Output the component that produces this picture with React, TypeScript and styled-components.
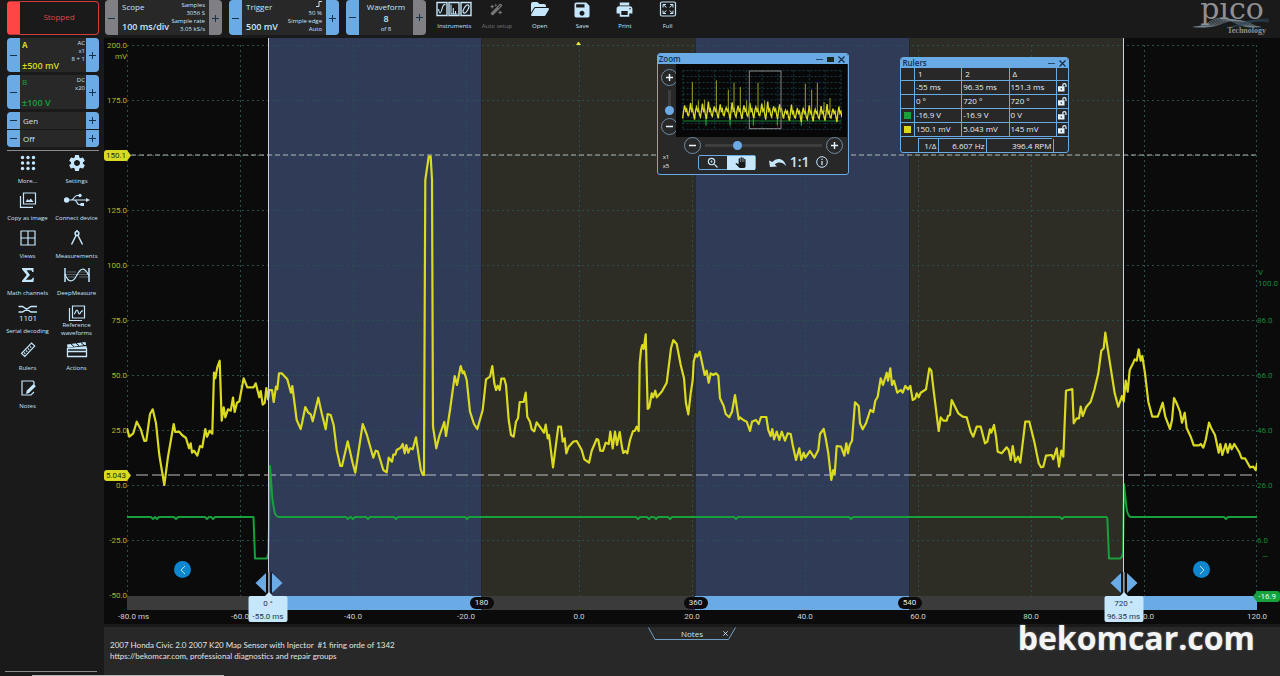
import React from "react";
import styled, { createGlobalStyle, css } from "styled-components";
import { MdPrint, MdSave, MdSettings, MdPanTool, MdZoomIn } from "react-icons/md";
import { FaFolderOpen, FaWandMagicSparkles } from "react-icons/fa6";

const c = {
  page: "#1a1a1a",
  panel: "#282828",
  plot: "#0b0b0b",
  blue: "#6aabe6",
  ice: "#c5e6fb",
  yellow: "#dada22",
  green: "#18a03c",
  grid: "#28504f",
  bandBlue: "#303b58",
  bandOlive: "#2d2d26",
  grey: "#808084",
};

const GlobalStyle = createGlobalStyle`
  * { box-sizing: border-box; }
  body { margin: 0; background: ${c.page}; font-family: "Open Sans", "Noto Sans", sans-serif; color: ${c.ice}; overflow: hidden; }
  button { font: inherit; color: inherit; padding: 0; border: 0; background: none; cursor: pointer; }
`;

/* ---------- page frame ---------- */

const Page = styled.div`
  display: grid;
  grid-template-columns: 104px minmax(0, 1fr);
  height: 100vh;
  min-height: 560px;
  position: relative;
`;

const Sidebar = styled.aside`
  display: flex;
  flex-direction: column;
  padding: 0 5px 4px 7px;
`;

const Main = styled.main`
  display: grid;
  grid-template-rows: 38px minmax(0, 1fr) 49px;
  min-width: 0;
`;

const Toolbar = styled.header`
  display: flex;
  align-items: flex-start;
  padding-left: 1px;
  gap: 7px;
`;

const Progress = styled.div`
  position: absolute;
  left: 32px;
  bottom: 0;
  width: 192px;
  height: 1px;
  background: #b8b8b8;
`;

/* ---------- pods ---------- */

const StopButton = styled.button`
  height: 34px;
  width: 92px;
  margin-top: 1px;
  border: 1px solid #d23b3b;
  border-left: 13px solid #ff4545;
  border-radius: 4px;
  color: #e04444;
  font-size: 8px;
  line-height: 30px;
  padding-bottom: 2px;
  flex: none;
`;

const Pod = styled.section<{ $w: number; $h: number }>`
  display: grid;
  grid-template-columns: 13px minmax(0, 1fr) 13px;
  width: ${(p) => p.$w}px;
  height: ${(p) => p.$h}px;
  background: ${c.panel};
  border-radius: 4px;
  overflow: hidden;
  flex: none;
`;

const Step = styled.button<{ $off?: boolean }>`
  display: grid;
  place-items: center;
  background: ${(p) => (p.$off ? c.grey : c.blue)};
  color: #16334d;
`;

const PodBody = styled.div`
  display: flex;
  justify-content: space-between;
  padding: 1px 4px 3px;
`;

const ChannelBody = styled(PodBody)`
  padding: 1px 1px 0 2px;
`;

const PodLeft = styled.div<{ $color?: string }>`
  display: flex;
  flex-direction: column;
  justify-content: space-between;
  color: ${(p) => p.$color || c.ice};
  font-size: 8px;
  line-height: 11px;
  white-space: nowrap;
`;

const PodValue = styled.strong`
  font-size: 9px;
  line-height: 13px;
  font-weight: 600;
`;

const PodRight = styled.div`
  font-size: 6px;
  line-height: 8px;
  text-align: right;
  white-space: nowrap;
`;

const WaveBody = styled.div`
  display: flex;
  flex-direction: column;
  align-items: center;
  justify-content: space-between;
  padding: 1px 0;
  font-size: 8px;
  line-height: 11px;
`;

const Small = styled.span`
  font-size: 6px;
  line-height: 9px;
`;

const Channels = styled.div`
  display: flex;
  flex-direction: column;
  gap: 3px;
  padding-top: 3px;
`;

const GenPair = styled.div`
  display: grid;
  gap: 1px;
  border-radius: 4px;
  overflow: hidden;
  width: 92px;
`;

const GenRow = styled.div`
  display: grid;
  grid-template-columns: 13px 1fr 13px;
  height: 17px;
  background: ${c.panel};
  font-size: 8px;
  line-height: 17px;
`;

const GenLabel = styled.span`
  padding-left: 3px;
`;

/* ---------- tool buttons ---------- */

const Tools = styled.nav`
  display: grid;
  grid-template-columns: 49px 49px;
  grid-template-rows: repeat(7, 1fr);
  height: 262px;
  margin-left: -4px;
  margin-top: 2px;
`;

const Tool = styled.button<{ $dim?: boolean }>`
  display: flex;
  flex-direction: column;
  align-items: center;
  color: ${(p) => (p.$dim ? "#777" : c.ice)};
  font-size: 6px;
  line-height: 8px;
  white-space: nowrap;

  svg {
    display: block;
    flex: none;
  }
`;

const ToolLabel = styled.span<{ $wrap?: boolean }>`
  margin-top: ${(p) => (p.$wrap ? -2 : 4)}px;
  ${(p) =>
    p.$wrap &&
    css`
      width: 40px;
      white-space: normal;
    `}
`;

const TopTools = styled.nav`
  display: grid;
  grid-template-columns: repeat(6, minmax(0, 1fr));
  width: 256px;
`;

const Rule = styled.hr`
  width: 92px;
  height: 1px;
  border: 0;
  background: #8b8b8b;
  margin: 3px 0 0;
`;

const BottomRule = styled(Rule)`
  margin-top: auto;
  margin-left: -2px;
`;

/* ---------- brand ---------- */

const Brand = styled.div`
  position: relative;
  margin-left: auto;
  margin-right: 9px;
  width: 78px;
  height: 37px;
  color: #8f9092;
  flex: none;
`;

const BrandName = styled.div`
  font: 30px/26px "DejaVu Serif", serif;
  margin-top: -4px;
  text-align: center;
`;

const BrandSub = styled.div`
  font: bold 8px/10px "Liberation Serif", serif;
  text-align: right;
  padding-right: 5px;
  padding-top: 4px;
`;

const BrandWave = styled.svg`
  position: absolute;
  left: 0;
  top: 17px;
`;

/* ---------- scope view ---------- */

const Scope = styled.section`
  position: relative;
  display: grid;
  grid-template-columns: 23px minmax(0, 1fr) 23px;
  grid-template-rows: minmax(0, 1fr) 14px 14px;
  background: ${c.plot};
  margin-bottom: 3px;
  font-family: Roboto, sans-serif;
  font-size: 8px;
`;

const YAxis = styled.div<{ $right?: boolean }>`
  position: relative;
  display: flex;
  flex-direction: column;
  justify-content: space-between;
  padding-top: 7px;
  color: ${(p) => (p.$right ? "#138a34" : "#b3b52c")};
`;

const YTick = styled.div<{ $right?: boolean }>`
  height: 0;
  display: flex;
  align-items: center;
  justify-content: ${(p) => (p.$right ? "flex-start" : "flex-end")};
  white-space: nowrap;
`;

const AxisNote = styled.div<{ $top: number; $right?: boolean }>`
  position: absolute;
  top: ${(p) => p.$top}%;
  ${(p) => (p.$right ? "left: 1px;" : "right: 0;")}
  line-height: 11px;
`;

const Flag = styled.div<{ $top: number }>`
  position: absolute;
  left: 0;
  top: ${(p) => p.$top}%;
  margin-top: -5px;
  width: 27px;
  height: 11px;
  padding-left: 2px;
  line-height: 11px;
  z-index: 2;
  color: #2a2a10;
  background: ${c.yellow};
  border-radius: 3px 0 0 3px;
  clip-path: polygon(0 0, 85% 0, 100% 50%, 85% 100%, 0 100%);
`;

const GreenFlag = styled.div`
  position: absolute;
  right: 0;
  bottom: -6px;
  width: 27px;
  height: 11px;
  padding-right: 4px;
  line-height: 11px;
  text-align: right;
  z-index: 2;
  color: #e8ffe8;
  background: ${c.green};
  border-radius: 0 3px 3px 0;
  clip-path: polygon(0 50%, 15% 0, 100% 0, 100% 100%, 15% 100%);
`;

const PlotArea = styled.div`
  position: relative;
  min-width: 0;
`;

const PlotSvg = styled.svg`
  display: block;
  width: 100%;
  height: 100%;
`;

const RotationBar = styled.div`
  grid-column: 2;
  position: relative;
  display: flex;
`;

const Sector = styled.div<{ $grow: number; $on: boolean }>`
  flex: ${(p) => p.$grow} 0 0;
  background: ${(p) => (p.$on ? c.blue : "#3b3b3b")};
`;

const Degree = styled.span<{ $at: number }>`
  position: absolute;
  left: ${(p) => p.$at}%;
  top: 1px;
  transform: translateX(-50%);
  width: 24px;
  height: 12px;
  border-radius: 6px;
  background: #0b0b0b;
  color: #e6e6e6;
  line-height: 12px;
  text-align: center;
`;

const XAxis = styled.div`
  grid-column: 2;
  display: flex;
  justify-content: space-between;
  color: #d2d2d2;
  line-height: 14px;
`;

const XTick = styled.div`
  width: 0;
  display: flex;
  justify-content: center;
  white-space: pre;
`;

const Unit = styled.span`
  width: 0;
`;

const XLabel = styled.span`
  display: flex;
`;

const RulerTag = styled.div<{ $at: number }>`
  position: absolute;
  left: ${(p) => p.$at}%;
  top: 0;
  transform: translateX(-50%);
  padding: 1px 2px 0;
  min-width: 39px;
  height: 26px;
  border-radius: 2px;
  background: ${c.ice};
  color: #1c3550;
  line-height: 13px;
  text-align: center;
  white-space: nowrap;
  z-index: 2;
`;

const RulerHandle = styled.svg<{ $at: number }>`
  position: absolute;
  left: ${(p) => p.$at}%;
  bottom: 0;
  transform: translateX(-50%);
`;

const PageButton = styled.button<{ $side: "left" | "right" }>`
  position: absolute;
  ${(p) => p.$side}: 47px;
  bottom: 18px;
  width: 17px;
  height: 17px;
  border-radius: 50%;
  background: #0e86d0;
  color: #bfe2ff;
  display: grid;
  place-items: center;
`;

/* ---------- floating windows ---------- */

const Window = styled.section<{ $left: number; $top: number; $w: number }>`
  position: absolute;
  left: ${(p) => p.$left}%;
  top: ${(p) => p.$top}px;
  width: ${(p) => p.$w}px;
  border: 1px solid ${c.blue};
  border-radius: 3px;
  background: ${c.panel};
  overflow: hidden;
  z-index: 3;
  font-family: "Open Sans", "Noto Sans", sans-serif;
`;

const TitleBar = styled.header`
  display: flex;
  align-items: center;
  justify-content: flex-end;
  gap: 3px;
  height: 10px;
  padding: 0 2px 0 1px;
  background: ${c.blue};
  color: #14304a;
  font-size: 8px;
  line-height: 10px;
`;

const Title = styled.h2`
  margin: 0 auto 0 0;
  font-size: inherit;
  font-weight: 600;
`;

const WinButton = styled.button`
  display: grid;
  place-items: center;
  width: 8px;
  height: 10px;
`;

const ZoomTop = styled.div`
  display: grid;
  grid-template-columns: 18px 1fr;
`;

const ZoomSide = styled.div`
  display: flex;
  flex-direction: column;
  align-items: center;
  justify-content: space-between;
  padding: 5px 0 2px 5px;
`;

const Overview = styled.div`
  background: #070707;
  padding: 5px 5px 6px 6px;
  margin-right: 1px;
  height: 73px;
`;

const Round = styled.button`
  display: grid;
  place-items: center;
  width: 17px;
  height: 17px;
  flex: none;
  border: 1px solid #6f8ba3;
  border-radius: 50%;
  color: #eaf6ff;
`;

const Slider = styled.input<{ $vertical?: boolean }>`
  appearance: none;
  margin: 0;
  background: linear-gradient(#3e3e3e, #3e3e3e) center / 100% 3px no-repeat;
  height: 9px;
  flex: 1;
  min-width: 0;
  ${(p) =>
    p.$vertical &&
    css`
      writing-mode: vertical-lr;
      direction: rtl;
      width: 9px;
      height: 25px;
      min-height: 0;
      flex: none;
      background: linear-gradient(#3e3e3e, #3e3e3e) center / 3px 100% no-repeat;
    `}

  &::-webkit-slider-thumb {
    appearance: none;
    width: 9px;
    height: 9px;
    border-radius: 50%;
    background: ${c.blue};
  }
`;

const ZoomSlide = styled.div`
  display: flex;
  align-items: center;
  gap: 4px;
  padding: 0 5px 0 26px;
`;

const ZoomFoot = styled.div`
  display: flex;
  align-items: center;
  padding: 0 19px 4px 5px;
  height: 20px;
`;

const Factors = styled.div`
  width: 35px;
  font-size: 6px;
  line-height: 9px;
  color: #eee;
`;

const Toggle = styled.div`
  display: grid;
  grid-template-columns: 28px 28px;
  height: 15px;
  border: 1px solid ${c.blue};
  border-radius: 2px;
  margin-right: 13px;
`;

const ToggleButton = styled.button<{ $on?: boolean }>`
  display: grid;
  place-items: center;
  background: ${(p) => (p.$on ? c.ice : "transparent")};
  color: ${(p) => (p.$on ? "#1a1a1a" : c.ice)};
`;

const Ratio = styled.button`
  font-size: 14px;
  line-height: 16px;
  font-weight: 600;
  padding: 0 6px 0 3px;
`;

const IconButton = styled.button`
  display: grid;
  place-items: center;
`;

const RulerTable = styled.table`
  width: 100%;
  table-layout: fixed;
  border-collapse: collapse;
  font-size: 8px;
  line-height: 12px;
  color: #e4eef6;

  th,
  td {
    height: 14px;
    padding: 0 0 0 1px;
    border: 1px solid ${c.blue};
    font-weight: 400;
    text-align: left;
    white-space: nowrap;
  }
  th {
    height: 12px;
    line-height: 11px;
    padding-left: 3px;
  }
  tr > :first-child {
    border-left: 0;
    width: 13px;
    padding: 0 0 0 3px;
  }
  tr > :last-child {
    border-right: 0;
    width: 12px;
  }
  thead th {
    border-top: 0;
  }
`;

const Swatch = styled.span<{ $color: string }>`
  display: block;
  width: 7px;
  height: 7px;
  background: ${(p) => p.$color};
`;

const Frequency = styled.div`
  display: grid;
  grid-template-columns: 20px 48px 67px;
  margin: 1px 16px 0 17px;
  height: 14px;
  border-left: 1px solid ${c.blue};
  border-top: 1px solid ${c.blue};
  font-size: 8px;
  line-height: 13px;
  color: #e4eef6;
`;

const FreqCell = styled.span`
  border-right: 1px solid ${c.blue};
  padding: 0 2px;
  text-align: right;
  white-space: nowrap;
`;

/* ---------- notes ---------- */

const Notes = styled.section`
  position: relative;
  background: ${c.panel};
  display: grid;
  grid-template-rows: 13px 1fr;
`;

const NotesTab = styled.div`
  position: relative;
  justify-self: center;
  display: flex;
  align-items: center;
  justify-content: flex-end;
  width: 88px;
  height: 13px;
  padding-right: 8px;
  gap: 20px;
  font-size: 8px;
  line-height: 12px;
`;

const TabOutline = styled.svg`
  position: absolute;
  inset: 0;
  pointer-events: none;
`;

const CloseNotes = styled.button`
  display: grid;
`;

const NoteText = styled.p`
  margin: 0;
  padding-left: 6px;
  font: 8px/11px Lato, "Open Sans", sans-serif;
  color: #e2e2e2;
  white-space: pre;
`;

const Watermark = styled.div`
  position: absolute;
  right: 25px;
  top: -11px;
  font: bold 32px/44px "Open Sans", sans-serif;
  color: #f4f4f4;
  text-shadow: 0 0 2px #777;
`;

/* ---------- icons ---------- */

const Plus = ({ size = 7, w = 1 }: { size?: number; w?: number }) => (
  <svg width={size} height={size} viewBox="0 0 7 7" stroke="currentColor" strokeWidth={w}>
    <path d="M0 3.5h7M3.5 0v7" />
  </svg>
);
const Minus = ({ size = 7, w = 1 }: { size?: number; w?: number }) => (
  <svg width={size} height={size} viewBox="0 0 7 7" stroke="currentColor" strokeWidth={w}>
    <path d="M0 3.5h7" />
  </svg>
);
const Cross = ({ size = 7 }: { size?: number }) => (
  <svg width={size} height={size} viewBox="0 0 7 7" stroke="currentColor" strokeWidth="1.3">
    <path d="M.5.5l6 6M6.5.5l-6 6" />
  </svg>
);

const Line: React.FC<{ w?: number; children: React.ReactNode; sw?: number }> = ({ w = 20, sw = 1.2, children }) => (
  <svg width={w} height="20" viewBox={`0 0 ${w} 20`} fill="none" stroke="currentColor" strokeWidth={sw}>
    {children}
  </svg>
);

const icons = {
  more: (
    <svg width="20" height="20" fill="currentColor">
      {[4.5, 10, 15.5].map((y) => [4.5, 10, 15.5].map((x) => <circle key={x + "-" + y} cx={x} cy={y} r="1.7" />))}
    </svg>
  ),
  copy: (
    <Line>
      <path d="M5.500 3h12v11h-12zM2.500 6v11.300h12.500" />
      <path d="M7.500 12l2-3 1.500 1.500 1.800-2 2.700 3.500z" fill="currentColor" stroke="none" />
    </Line>
  ),
  usb: (
    <Line w={28}>
      <path d="M3 10h21M8 10c3 0 3-4.500 6-4.500h2M11 10c3 0 3 4.500 5 4.500h2" />
      <circle cx="3.600" cy="10" r="2.700" fill="currentColor" stroke="none" />
      <path d="M23 8l4 2-4 2z" fill="currentColor" stroke="none" />
      <circle cx="17" cy="5.500" r="1.700" fill="currentColor" stroke="none" />
      <path d="M17.500 13h3.500v3h-3.500z" fill="currentColor" stroke="none" />
    </Line>
  ),
  views: (
    <Line>
      <path d="M3 3h14v14H3zM10 3v14M3 10h14" />
    </Line>
  ),
  measure: (
    <Line sw={1.5}>
      <circle cx="10" cy="5.500" r="1.900" />
      <path d="M9 7.500L4.500 16.500M11 7.500l4.500 9M10 3.500V2" />
    </Line>
  ),
  sigma: (
    <svg width="20" height="20" fill="currentColor">
      <path d="M4 3h11.500v4h-1.300c-.3-1.400-.8-1.700-2.200-1.700H8.500L12 10l-4.200 4.700h4.400c1.500 0 2-.4 2.500-1.900H16l-.6 4.200H4v-1.300L8.700 10 4 4.300z" />
    </svg>
  ),
  deep: (
    <Line w={28}>
      <path d="M2 3v14M26 3v14" strokeWidth="1.500" />
      <path d="M2 9c3 9 8 9 12 1s8-8 12 1" />
      <path d="M2 9.500h24M4 12h8M16 7h7M4 7h9M16 12h9" strokeWidth=".5" opacity=".7" />
    </Line>
  ),
  serial: (
    <Line w={22}>
      <path d="M1.500 3.500h4l8.500 5.500h6M1.500 9h4l8.500-5.500h6" strokeWidth="1.400" />
      <text x="11" y="17.500" fontSize="8" textAnchor="middle" fill="currentColor" stroke="none" fontFamily="Roboto">
        1101
      </text>
    </Line>
  ),
  reference: (
    <Line>
      <path d="M5.500 3h12v12h-12zM2.500 5v12.500H15" />
      <path d="M7 11c1.500 0 1.500-4 3-4s1 4 2.300 4S13.500 7.500 16 8" />
    </Line>
  ),
  ruler: (
    <Line sw={1.1}>
      <path d="M3.500 13.500l10-10.500 3.300 3-10 10.500zM6 12.500l1.300 1.300M8 10.500l1.300 1.300M10 8.500l1.300 1.300M12 6.300l1.300 1.300" />
    </Line>
  ),
  actions: (
    <Line w={22} sw={1.3}>
      <path d="M1.500 8.500h19v8h-19zM1.500 11.500h19" />
      <path d="M1.500 7.800L1 4.500 19.500 2l.6 2.700zM2 8.500h18.500V6L2 8z" fill="currentColor" stroke="none" />
      <path d="M5 4l3 2.500M10 3.200l3 2.500M15 2.600l3 2.500" stroke="#1a1a1a" strokeWidth="1" />
    </Line>
  ),
  notes: (
    <Line>
      <path d="M16 8V4l-1-1H4v14h9l3-3" />
      <path d="M8 16l.8-3.500L15.500 6l2.300 2.300L11 15z" fill="currentColor" stroke="none" />
    </Line>
  ),
  instruments: (
    <svg width="36" height="20" viewBox="0 0 36 20" fill="none" stroke="currentColor" strokeWidth="1.400">
      <path d="M1 2.500h10v13H1zM13 2.500h10v13H13zM25 2.500h10v13H25z" />
      <path d="M2.500 9c.8 5 2.300 5 3.200 1S8 3.500 9.500 5M15 4.500v9.500h6.500M17.300 14V8M19.500 14v-3" strokeWidth="1.100" />
      <ellipse cx="30" cy="9" rx="2" ry="4.500" transform="rotate(30 30 9)" strokeWidth="1.200" />
    </svg>
  ),
  full: (
    <Line>
      <rect x="2.500" y="2" width="15" height="14" rx="1.500" />
      <path d="M5 7.500V4.500h3M5 4.500l3.500 3M15 7.500V4.500h-3M15 4.500l-3.500 3M5 10.500v3h3M5 13.500l3.500-3M15 10.500v3h-3M15 13.500l-3.500-3" strokeWidth="1" />
    </Line>
  ),
};

const LockIcon = styled.svg`
  display: block;
`;

const OpenLock = () => (
  <LockIcon width="9" height="9" viewBox="0 0 9 9">
    <path d="M0 3.300h6.500v5.200H0z" fill="#e4f4ff" />
    <path d="M4.800 3.500V2.200a1.600 1.600 0 013.200 0v1.800" fill="none" stroke="#e4f4ff" strokeWidth="1.200" />
    <path d="M2.700 5.200h1.200v1.600H2.700z" fill="#333" />
  </LockIcon>
);

/* ---------- trace data ---------- */

type Block = { x: number; y: number; p: string };

// Each block is recorded at three steps per unit, relative to its own origin.
const toPoints = (blocks: Block[]) =>
  blocks
    .flatMap((b) =>
      b.p.split(" ").map((pair) => {
        const [px, py] = pair.split(",").map(Number);
        return `${(b.x + px / 3).toFixed(1)},${(b.y + py / 3).toFixed(1)}`;
      })
    )
    .join(" ");

const mapTrace: Block[] = [
  {
    x: 110,
    y: 340,
    p: "51,265 58,290 70,280 80,245 92,268 103,303 109,302 120,222 128,208 138,250 148,345 163,435 174,350 191,252 196,276 208,275 216,285 228,294 237,325 242,310 246,338 252,332 262,347 270,318 277,322 286,267 291,290 299,272 307,281 312,98 316,115 322,82 329,62 335,242 341,202 346,232 354,208 362,212 369,173 374,216 381,188 388,184 401,115 412,142 431,142 437,130 448,172 452,153 458,194 464,189 469,144 474,178 478,150 486,150 491,186 498,140 502,148 507,100 515,100 532,118 543,158 547,138 560,240 572,267 576,250 586,201 594,217 602,223 608,244 625,173 635,220 647,268 653,222 662,225 671,256 680,330 691,378 696,378 713,304 728,370 736,398 758,252 770,283 790,353 797,332 803,334 820,390 830,397 836,353 846,365 850,344 856,344 860,330 872,323 878,312 884,340 889,315 895,338 900,325",
  },
  {
    x: 400,
    y: 330,
    p: "38,358 48,322 62,418 68,435 72,435 73,200 76,-450 86,-520 92,-520 96,-450 99,290 109,355 118,318 133,276 138,318 150,240 164,138 171,165 182,108 188,130 192,124 200,150 210,245 222,282 232,297 248,240 258,148 270,140 277,108 283,160 288,180 293,167 299,180 304,146 313,146 318,165 326,270 333,315 341,320 348,275 354,265 359,216 371,216 377,188 382,260 390,275 395,298 403,304 410,277 421,292 432,308 437,284 443,325 447,315 459,412 475,290 483,290 488,335 494,325 499,370 506,350 520,335 530,333 545,360 553,388 567,398 575,362 590,327 595,330 601,362 609,363 617,338 626,342 631,305 638,355 645,305 651,345 659,306 666,352 670,369 676,363 682,370 690,330 699,303 704,303 710,290 716,303 719,100 723,60 727,45 731,57 737,13 743,237 748,232 755,190 759,202 766,182 770,202 785,185 800,158 813,55 820,30 830,42 842,105 852,145 858,220 865,253 872,190 878,150",
  },
  {
    x: 690,
    y: 330,
    p: "11,95 17,72 22,80 29,65 44,135 50,122 56,158 62,130 70,135 78,130 85,137 90,205 101,228 107,252 118,262 126,245 135,195 146,268 150,262 160,270 170,275 180,303 186,275 198,270 206,282 213,261 229,261 235,300 242,318 247,297 252,328 260,305 268,330 275,305 285,332 293,310 302,312 308,345 318,390 328,355 334,390 341,368 346,383 360,363 373,383 385,360 390,312 401,297 407,325 415,370 424,450 430,420 434,432 440,348 453,350 463,377 469,340 474,370 479,345 486,332 495,217 506,228 510,280 518,298 528,280 541,240 550,246 556,212 563,200 572,145 579,165 590,128 594,152 601,115 606,165 612,152 622,188 632,180 638,188 646,168 654,178 661,168 668,210 676,205 680,190 686,202 692,188 708,178 718,115 724,122 732,190 742,270 746,303 752,262 760,272 770,272 774,258 780,255 785,210 795,230 805,250 818,260 830,262 842,305 850,320 860,290 872,290 885,340 892,335",
  },
  {
    x: 980,
    y: 310,
    p: "30,358 34,368 42,345 48,380 53,425 65,430 80,412 86,420 92,450 98,408 106,455 114,440 121,458 136,335 148,335 163,395 176,460 183,472 190,470 198,437 215,435 220,448 230,415 237,470 244,422 250,440 258,242 277,237 281,340 290,325 297,325 302,290 308,318 318,292 332,275 343,240 355,190 364,122 371,115 376,68 382,108 390,160 404,250 415,290 426,258 431,275 437,212 443,245 449,180 460,158 464,148 470,152 476,118 482,152 487,138 495,190 505,275 517,320 533,320 538,308 548,278 556,320 570,357 576,330 582,264 590,280 600,305 606,338 614,308 620,355 632,380 641,406 657,406 662,402 670,413 677,390 687,338 694,355 705,375 716,428 721,402 727,435 737,402 743,428 750,402 755,418 763,402 777,425 785,445 795,445 810,472 820,470 827,480 832,458",
  },
];

const LEVEL = 517;
const dips = (xs: number[]) => xs.map((x) => `H${x - 2}l2 2l2 -2`).join("");
const injector =
  `M127 ${LEVEL}` +
  dips([153, 157, 176, 207, 213]) +
  `H253.500L255 558.500H267L268.500 553L270 466L272.500 500L274.500 512Q276 517 279 ${LEVEL}` +
  dips([348, 353, 368, 396, 467, 638, 649, 656, 670, 736, 851, 1062]) +
  `H1106.500Q1107.500 517 1107.500 522L1109 558.500H1120Q1122 558 1123 553L1124 484L1126.500 508Q1128 517 1131 ${LEVEL}` +
  dips([1226]) +
  `H1257`;

const bands = [
  { x: 268, w: 213.5, fill: c.bandBlue },
  { x: 481.5, w: 214, fill: c.bandOlive },
  { x: 695.5, w: 214, fill: c.bandBlue },
  { x: 909.5, w: 214, fill: c.bandOlive },
];

const pct = (x: number) => ((x - 127) / 1130) * 100;

const overviewTrace = () => {
  const heights = [165, 158, 170, 160, 154, 168, 162, 172, 156, 166];
  const lows = [204, 196, 208, 200, 206, 198];
  let out = "";
  for (let i = 0; i < 27; i++) {
    const x = 96 + i * 17.8;
    const shift = x > 390 ? 7 : 0;
    out += `${x},${lows[i % 6] + shift} ${x + 3},${180 + shift} ${x + 6},${heights[i % 10] + shift} ${x + 9},${182 + shift} ${x + 12},${176 + shift} ${x + 15},${194 + shift} `;
  }
  return out;
};
const overviewSpikes = [
  [125, 95], [143, 150], [162, 148], [197, 90], [233, 118], [250, 97], [269, 110], [288, 150], [322, 97], [342, 150],
  [464, 100], [483, 118], [500, 97], [520, 155], [538, 143],
];

/* ---------- parts ---------- */

const leftTicks = ["200.0", "175.0", "", "125.0", "100.0", "75.0", "50.0", "25.0", "0.0", "-25.0", "-50.0"];
const rightTicks = ["", "", "", "", "", "86.0", "66.0", "46.0", "26.0", "6.0", ""];
const xTicks = ["-80.0", "-60.0", "-40.0", "-20.0", "0.0", "20.0", "40.0", "60.0", "80.0", "100.0", "120.0"];

const sideTools: [string, React.ReactNode][] = [
  ["More...", icons.more],
  ["Settings", <MdSettings size={20} key="s" />],
  ["Copy as image", icons.copy],
  ["Connect device", icons.usb],
  ["Views", icons.views],
  ["Measurements", icons.measure],
  ["Math channels", icons.sigma],
  ["DeepMeasure", icons.deep],
  ["Serial decoding", icons.serial],
  ["Reference waveforms", icons.reference],
  ["Rulers", icons.ruler],
  ["Actions", icons.actions],
  ["Notes", icons.notes],
];

const topTools: [string, React.ReactNode, boolean?][] = [
  ["Instruments", icons.instruments],
  ["Auto setup", <FaWandMagicSparkles size={13} key="w" />, true],
  ["Open", <FaFolderOpen size={18} key="o" />],
  ["Save", <MdSave size={20} key="v" />],
  ["Print", <MdPrint size={19} key="p" />],
  ["Full", icons.full],
];

const TopIcon = styled.span`
  display: grid;
  place-items: center;
  height: 18px;
`;

const Steps: React.FC<{ name: string; w: number; h: number; off?: [boolean, boolean]; children: React.ReactNode }> = ({
  name,
  w,
  h,
  off = [false, false],
  children,
}) => (
  <Pod $w={w} $h={h}>
    <Step $off={off[0]} aria-label={`${name} down`}>
      <Minus />
    </Step>
    {children}
    <Step $off={off[1]} aria-label={`${name} up`}>
      <Plus />
    </Step>
  </Pod>
);

const Plot = () => (
  <PlotArea>
    <PlotSvg viewBox="127 38 1130 558" preserveAspectRatio="none">
      {bands.map((b) => (
        <rect key={b.x} x={b.x} y="38" width={b.w} height="558" fill={b.fill} />
      ))}
      <g stroke={c.grid} strokeDasharray="2 3" strokeWidth="1">
        {xTicks.map((t, i) => (
          <path key={t} d={`M${Math.min(127.5 + i * 113, 1256.5)} 45V596`} />
        ))}
        {leftTicks.slice(0, 10).map((_, i) => (
          <path key={i} d={`M127 ${Math.round(44.5 + i * 55.1) + 0.5}H1257`} />
        ))}
      </g>
      <path d="M131 155H1257" stroke="#b4b6b6" strokeDasharray="5 3" strokeWidth="1" />
      <path d="M136 475H1257" stroke="#b9bdc4" strokeDasharray="12 4" strokeWidth="1" />
      <path d={injector} fill="none" stroke={c.green} strokeWidth="2" strokeLinejoin="round" />
      <polyline points={toPoints(mapTrace)} fill="none" stroke={c.yellow} strokeWidth="2.200" strokeLinejoin="round" />
      <path d="M268.500 38V596M1123.500 38V596" stroke="#ccd3df" strokeWidth="1" />
      <path d="M576 45l2-3h1l2 3z" fill="#e8e640" />
    </PlotSvg>
    <PageButton $side="left" aria-label="Previous buffer">
      <svg width="6" height="10" fill="none" stroke="currentColor">
        <path d="M5 1L1 5l4 4" />
      </svg>
    </PageButton>
    <PageButton $side="right" aria-label="Next buffer">
      <svg width="6" height="10" fill="none" stroke="currentColor">
        <path d="M1 1l4 4-4 4" />
      </svg>
    </PageButton>
    {[268.5, 1123.5].map((x) => (
      <RulerHandle key={x} $at={pct(x)} width="28" height="24">
        <path d="M10.500 0h7v24h-7z" fill={c.plot} opacity=".6" />
        <path d="M14 0v24" stroke="#ccd3df" />
        <path d="M0.500 11L11 1v20zM27.500 11L17 1v20z" fill={c.blue} />
        <path d="M10 24l4-4 4 4z" fill={c.ice} />
      </RulerHandle>
    ))}
  </PlotArea>
);

const ZoomWindow = () => (
  <Window $left={47} $top={15} $w={192} aria-label="Zoom">
    <TitleBar>
      <Title>Zoom</Title>
      <WinButton aria-label="Minimise"><Minus w={0.8} /></WinButton>
      <WinButton aria-label="Dock">
        <svg width="7" height="5" fill="#172a20"><rect width="7" height="5" /></svg>
      </WinButton>
      <WinButton aria-label="Close"><Cross /></WinButton>
    </TitleBar>
    <ZoomTop>
      <ZoomSide>
        <Round aria-label="Zoom in vertically"><Plus w={1.4} /></Round>
        <Slider $vertical type="range" min={0} max={100} defaultValue={0} aria-label="Vertical zoom" />
        <Round aria-label="Zoom out vertically"><Minus w={1.4} /></Round>
      </ZoomSide>
      <Overview>
        <svg width="100%" height="62" viewBox="94 56 480 186" preserveAspectRatio="none">
          <g stroke="#1d4a55" strokeWidth="2.500" strokeDasharray="6 6" fill="none">
            {Array.from({ length: 11 }, (_, i) => (
              <path key={i} d={`M${97 + i * 47.4} 60V238`} />
            ))}
            {Array.from({ length: 11 }, (_, i) => (
              <path key={"h" + i} d={`M96 ${61 + i * 17.6}H572`} />
            ))}
          </g>
          <path d="M96 212H572" stroke={c.green} strokeWidth="2.500" />
          <path d="M166 190V226M238 205V226M308 205V226M380 205V226M452 186V226" stroke="#1fc04a" strokeWidth="3" />
          <polyline points={overviewTrace()} fill="none" stroke={c.yellow} strokeWidth="4" />
          <g stroke="#b9b92a" strokeWidth="2.600">
            {overviewSpikes.map(([x, y]) => (
              <path key={x} d={`M${x} ${y}V185`} />
            ))}
          </g>
          <rect x="296" y="62" width="95" height="173" fill="none" stroke="#8a8a8a" strokeWidth="3" />
        </svg>
      </Overview>
    </ZoomTop>
    <ZoomSlide>
      <Round aria-label="Zoom out horizontally"><Minus w={1.4} /></Round>
      <Slider type="range" min={0} max={100} defaultValue={26} aria-label="Horizontal zoom" />
      <Round aria-label="Zoom in horizontally"><Plus w={1.4} /></Round>
    </ZoomSlide>
    <ZoomFoot>
      <Factors>x1<br />x5</Factors>
      <Toggle>
        <ToggleButton aria-label="Marquee zoom"><MdZoomIn size={14} /></ToggleButton>
        <ToggleButton $on aria-label="Pan"><MdPanTool size={11} /></ToggleButton>
      </Toggle>
      <IconButton aria-label="Undo zoom">
        <svg width="18" height="12" viewBox="0 0 18 12">
          <path d="M0 4.500L1 11l7-.5-2.200-2C9 5.500 13.500 6 17 10 15.500 2.500 8 1 3.300 6z" fill={c.ice} />
        </svg>
      </IconButton>
      <Ratio>1:1</Ratio>
      <IconButton aria-label="Zoom information">
        <svg width="12" height="12" fill="none" stroke={c.ice}>
          <circle cx="6" cy="6" r="5.300" />
          <path d="M6 5v4M6 2.800v1.200" strokeWidth="1.300" />
        </svg>
      </IconButton>
    </ZoomFoot>
  </Window>
);

const rulerRows: [string | null, string, string, string][] = [
  [null, "-55 ms", "96.35 ms", "151.3 ms"],
  [null, "0 °", "720 °", "720 °"],
  ["#16a23a", "-16.9 V", "-16.9 V", "0 V"],
  ["#dcd815", "150.1 mV", "5.043 mV", "145 mV"],
];

const RulersWindow = () => (
  <Window $left={67.72} $top={19} $w={169} aria-label="Rulers">
    <TitleBar>
      <Title>Rulers</Title>
      <WinButton aria-label="Minimise"><Minus w={0.8} /></WinButton>
      <WinButton aria-label="Close"><Cross /></WinButton>
    </TitleBar>
    <RulerTable>
      <thead>
        <tr>
          <th />
          <th>1</th>
          <th>2</th>
          <th>Δ</th>
          <th />
        </tr>
      </thead>
      <tbody>
        {rulerRows.map(([color, a, b, d], i) => (
          <tr key={i}>
            <td>{color && <Swatch $color={color} />}</td>
            <td>{a}</td>
            <td>{b}</td>
            <td>{d}</td>
            <td><OpenLock /></td>
          </tr>
        ))}
      </tbody>
    </RulerTable>
    <Frequency>
      <FreqCell>1/Δ</FreqCell>
      <FreqCell>6.607 Hz</FreqCell>
      <FreqCell>396.4 RPM</FreqCell>
    </Frequency>
  </Window>
);

export default function App() {
  return (
    <Page>
      <GlobalStyle />
      <Sidebar>
        <StopButton>Stopped</StopButton>
        <Channels>
          <Steps name="Channel A range" w={92} h={34}>
            <ChannelBody>
              <PodLeft $color={c.yellow}>
                <b>A</b>
                <PodValue>±500 mV</PodValue>
              </PodLeft>
              <PodRight>AC<br />x1<br />8 + 1</PodRight>
            </ChannelBody>
          </Steps>
          <Steps name="Channel B range" w={92} h={34}>
            <ChannelBody>
              <PodLeft $color={c.green}>
                <span>B</span>
                <PodValue>±100 V</PodValue>
              </PodLeft>
              <PodRight>DC<br />x20</PodRight>
            </ChannelBody>
          </Steps>
          <GenPair>
            {["Gen", "Off"].map((t) => (
              <GenRow key={t}>
                <Step aria-label={`${t} down`}><Minus /></Step>
                <GenLabel>{t}</GenLabel>
                <Step aria-label={`${t} up`}><Plus /></Step>
              </GenRow>
            ))}
          </GenPair>
        </Channels>
        <Rule />
        <Tools>
          {sideTools.map(([label, icon]) => (
            <Tool key={label}>
              {icon}
              <ToolLabel $wrap={label.startsWith("Reference")}>{label}</ToolLabel>
            </Tool>
          ))}
        </Tools>
        <BottomRule />
      </Sidebar>
      <Main>
        <Toolbar>
          <Steps name="Timebase" w={117} h={35} off={[true, true]}>
            <PodBody>
              <PodLeft>
                <span>Scope</span>
                <PodValue>100 ms/div</PodValue>
              </PodLeft>
              <PodRight>Samples<br />3056 S<br />Sample rate<br />3.05 kS/s</PodRight>
            </PodBody>
          </Steps>
          <Steps name="Trigger level" w={110} h={35}>
            <PodBody>
              <PodLeft>
                <span>Trigger</span>
                <PodValue>500 mV</PodValue>
              </PodLeft>
              <PodRight>
                <svg width="6" height="6" fill="none" stroke="currentColor"><path d="M0 5.500h3v-5h3" /></svg>
                <br />50 %<br />Simple edge<br />Auto
              </PodRight>
            </PodBody>
          </Steps>
          <Steps name="Waveform" w={80} h={35} off={[false, true]}>
            <WaveBody>
              <span>Waveform</span>
              <PodValue>8</PodValue>
              <Small>of 8</Small>
            </WaveBody>
          </Steps>
          <TopTools>
            {topTools.map(([label, icon, dim]) => (
              <Tool key={label} $dim={dim}>
                <TopIcon>{icon}</TopIcon>
                <ToolLabel>{label}</ToolLabel>
              </Tool>
            ))}
          </TopTools>
          <Brand>
            <BrandWave width="78" height="12" fill="none" strokeWidth=".6">
              {[0, 1, 2, 3, 4, 5].map((i) => (
                <path key={i} d={`M${i * 2} 10C${14 + i * 3} 10 ${18 + i * 2} ${1 + i * 0.5} ${28 + i * 3} ${1 + i * 0.5}S${44 + i * 3} 10 ${58 + i * 2} 10`} stroke="#8296a3" />
              ))}
              {[0, 1, 2, 3].map((i) => (
                <path key={"b" + i} d={`M${36 + i * 3} 10C${48 + i} 8 ${52 + i * 2} 2 ${76} ${2 + i}`} stroke="#2d4a5c" />
              ))}
            </BrandWave>
            <BrandName>pico</BrandName>
            <BrandSub>Technology</BrandSub>
          </Brand>
        </Toolbar>
        <Scope>
          <YAxis>
            {leftTicks.map((t, i) => (
              <YTick key={i}>{t}</YTick>
            ))}
            <AxisNote $top={2.3}>mV</AxisNote>
            <Flag $top={20.97}>150.1</Flag>
            <Flag $top={78.3}>5.043</Flag>
          </YAxis>
          <Plot />
          <YAxis $right>
            {rightTicks.map((t, i) => (
              <YTick key={i} $right>{t}</YTick>
            ))}
            <AxisNote $right $top={41}>V<br />100.0</AxisNote>
            <AxisNote $right $top={92}>&nbsp;&nbsp;—</AxisNote>
            <GreenFlag>-16.9</GreenFlag>
          </YAxis>
          <RotationBar>
            {[141, 213, 214, 214, 214, 134].map((g, i) => (
              <Sector key={i} $grow={g} $on={i % 2 === 1} />
            ))}
            <Degree $at={pct(481.5)}>180</Degree>
            <Degree $at={pct(695.5)}>360</Degree>
            <Degree $at={pct(909.5)}>540</Degree>
            <RulerTag $at={pct(268)}>0 °<br />-55.0 ms</RulerTag>
            <RulerTag $at={pct(1123.5)}>720 °<br />96.35 ms</RulerTag>
          </RotationBar>
          <XAxis>
            {xTicks.map((t, i) => (
              <XTick key={t}>
                <XLabel>{t}{i === 0 && <Unit> ms</Unit>}</XLabel>
              </XTick>
            ))}
          </XAxis>
          <ZoomWindow />
          <RulersWindow />
        </Scope>
        <Notes>
          <NotesTab>
            <TabOutline width="88" height="13" fill="none" stroke="#6f9fca">
              <path d="M.5 .5L7 12.500H80.500L87.500 .5" />
            </TabOutline>
            <span>Notes</span>
            <CloseNotes aria-label="Close notes"><Cross size={5} /></CloseNotes>
          </NotesTab>
          <NoteText>{"2007 Honda Civic 2.0 2007 K20 Map Sensor with Injector  #1 firing orde of 1342\nhttps://bekomcar.com, professional diagnostics and repair groups"}</NoteText>
          <Watermark>bekomcar.com</Watermark>
        </Notes>
      </Main>
      <Progress />
    </Page>
  );
}
